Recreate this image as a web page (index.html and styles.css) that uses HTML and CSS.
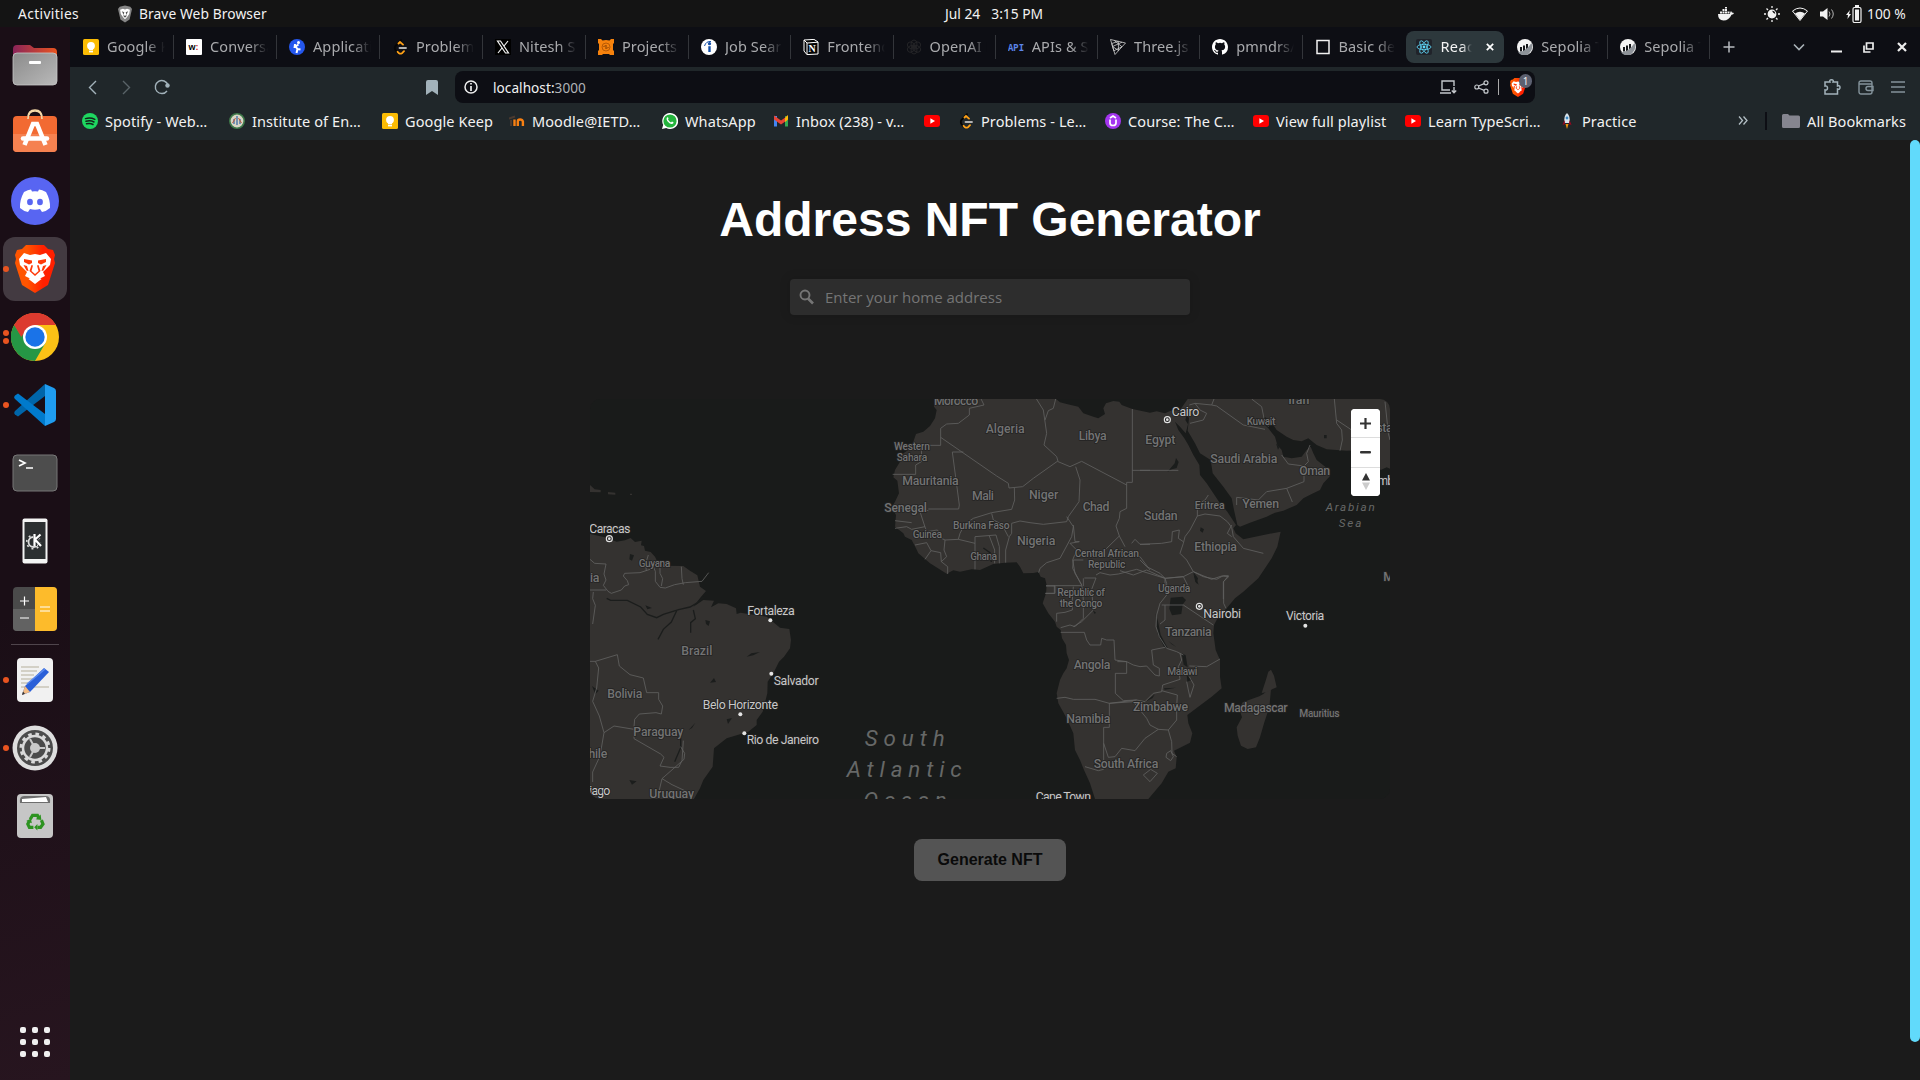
FILE: index.html
```html
<!DOCTYPE html>
<html lang="en">
<head>
<meta charset="utf-8">
<title>Address NFT Generator</title>
<link rel="stylesheet" href="styles.css">
</head>
<body>
<svg class="defs" width="0" height="0">
  <symbol id="keep" viewBox="0 0 16 16"><rect width="16" height="16" rx="1.5" fill="#fbbc04"/><circle cx="8" cy="6.8" r="3.9" fill="#fff"/><rect x="6" y="9" width="4" height="2.4" fill="#fff"/><rect x="6" y="12" width="4" height="1.4" fill="#fff"/></symbol>
  <symbol id="leet" viewBox="0 0 16 16" fill="none" stroke-width="1.8" stroke-linecap="round"><path d="M9 1.2 3.4 7q-1.2 2 0 4l2 2.4" stroke="#050505"/><path d="M6.500 4.500 8 3l3 2.600M5.600 12.800l1.400 1.400q1.400 .8 3 0l2-2" stroke="#ffa116"/><path d="M7.500 9h6.500" stroke="#b3b3b3"/></symbol>
  <symbol id="yt" viewBox="0 0 16 16"><rect y="2" width="16" height="12" rx="3" fill="#f00"/><path d="M6.400 5.200v5.600L11 8z" fill="#fff"/></symbol>
  <symbol id="ether" viewBox="0 0 16 16"><circle cx="8" cy="8" r="8" fill="#f4f4f4"/><path d="M3 8h2v4.500H3zM6 6.500h2v5.500H6zM9 5h2v5.500H9z" fill="#14161a"/><path d="M1 13.500Q9 12.500 14.500 4q2.500 6-2.500 10.500T1 13.500z" fill="#8d9298"/></symbol>
  <symbol id="lion" viewBox="0 0 40 48"><path d="M11 0h18l4 4 5 1 2 5-1 4 1 4-7 22-13 8-13-8L0 18l1-4-1-4 2-5 5-1z" fill="url(#braveFill)"/><path d="m4 14 5-6 6 2 5-1 5 1 6-2 5 6-1 6-7 7 2 4-6 3-4-3-4 3-6-3 2-4-7-7zM13.500 34l6.500-3 6.500 3-6.500 5z" fill="#fff"/><path d="m9 14 8 1.500v2.500l-3 1.500-5-2.500zM31 14l-8 1.500v2.500l3 1.500 5-2.500zM16.500 20l1.500.5-1.500 5.500 3.500 3 3.500-3-1.500-5.500 1.500-.5 2 6-5.500 5-5.500-5zM8.500 20l3.500 1 1.500 5-2-.5zM31.500 20 28 21l-1.500 5 2-.5z" fill="#ff3a0a"/></symbol>
  <linearGradient id="braveFill"><stop offset=".3" stop-color="#ff5500"/><stop offset=".7" stop-color="#ff2000"/></linearGradient>
</svg>

<header class="topbar">
  <span class="activities">Activities</span>
  <span class="app-name"><svg width="14" height="18" viewBox="0 0 40 48"><path d="M5 3 20 0l15 3 5 7-7 30-13 8-13-8L0 10z" fill="#868686"/><path d="m6 12 8-3 6 2 6-2 8 3-2 12-7 10-5 5-5-5-7-10z" fill="#fff"/><path d="m11 16 7 3-2 7 4 4 4-4-2-7 7-3-4 8-2 9h-6l-2-9z" fill="#555"/></svg>Brave Web Browser</span>
  <span class="clock"><span>Jul 24</span><span>3:15 PM</span></span>
  <span class="tray">
    <svg class="docker" width="16" height="14" viewBox="0 0 16 14" fill="#f2f2f2"><path d="M0 7h12q0-2 1-3l1 1.500 2 .5q-.5 1.500-2.500 1.700Q11 13.500 5.500 13.500 0 13 0 7z"/><path d="M2 4.500h2v2H2zM4.500 4.500h2v2h-2zM7 4.500h2v2H7zM9.500 4.500h2v2h-2zM4.500 2h2v2h-2zM7 2h2v2H7zM7 0h2v1.500H7z"/></svg>
    <svg width="16" height="16" viewBox="0 0 16 16"><circle cx="8" cy="8" r="3.800" fill="none" stroke="#f2f2f2" stroke-width="1.200"/><path d="M8 4a4 4 0 1 0 4 4A5 5 0 0 1 8 4z" fill="#f2f2f2"/><path d="M8 0v2M8 14v2M0 8h2M14 8h2M2.500 2.500 4 4M12 12l1.500 1.500M2.500 13.500 4 12M12 4l1.500-1.500" stroke="#f2f2f2" stroke-width="1.300"/></svg>
    <svg width="16" height="14" viewBox="0 0 16 14"><path d="M.5 4Q8-2 15.500 4L8 13.500z" fill="none" stroke="#f2f2f2"/><path d="M3 6.500Q8 3 13 6.500L8 13z" fill="#f2f2f2"/></svg>
    <svg width="15" height="14" viewBox="0 0 15 14"><path d="M0 4.500h3L7.500 1v12L3 9.500H0z" fill="#f2f2f2"/><path d="M9 4.500q2 2.500 0 5M11.500 2.500q3.500 4.500 0 9" stroke="#b5b5b5" fill="none"/></svg>
    <svg class="battery" width="16" height="18" viewBox="0 0 16 18"><path d="M4 5 0 10h2l-.5 4L5 9H3z" fill="#f2f2f2"/><rect x="7" y="2.500" width="8" height="15" rx="1.500" fill="none" stroke="#f2f2f2" stroke-width="1.200"/><rect x="9" y="4.500" width="4" height="11" fill="#f2f2f2"/><rect x="9" y="0" width="4" height="2.500" fill="#f2f2f2"/></svg>
    <span class="percent">100 %</span>
  </span>
</header>

<div class="desktop">
<aside class="dock">
  <div class="slot"><svg width="46" height="46" viewBox="0 0 46 46"><defs><linearGradient id="fold"><stop stop-color="#8a2459"/><stop offset="1" stop-color="#e95420"/></linearGradient><linearGradient id="grey" x2="1" y2="1"><stop stop-color="#8b8b8b"/><stop offset="1" stop-color="#b9b9b9"/></linearGradient></defs><path d="M1 7q0-4 4-4h13l4 3h19q4 0 4 4v8H1z" fill="url(#fold)"/><rect x="1" y="11" width="44" height="32" rx="4" fill="url(#grey)" stroke="#c8c8c8" stroke-width=".8"/><rect x="17" y="19" width="12" height="3" rx="1" fill="#fff"/></svg></div>
  <div class="slot"><svg class="raised" width="46" height="46" viewBox="0 0 46 46"><path d="M16 10q0-8 7-8t7 8" fill="none" stroke="#f5d9a8" stroke-width="1.700"/><rect x="1" y="8" width="44" height="36" rx="4" fill="#f26a32"/><path d="M1 26h44v14q0 4-4 4H5q-4 0-4-4z" fill="#f58150"/><path d="M16 11q0-8 7-8t7 8" fill="none" stroke="#f5d9a8" stroke-width="1.700"/><path d="m12.500 37 8.500-21h4l8.500 21" fill="none" stroke="#fff" stroke-width="4.500"/><path d="M11 30.500h24" stroke="#fff" stroke-width="4.500" stroke-linecap="round"/></svg></div>
  <div class="slot"><svg width="48" height="48" viewBox="0 0 48 48"><circle cx="24" cy="24" r="24" fill="#5865f2"/><path d="M13 15q4-2.500 7-2.500l1 2q3-.5 6 0l1-2q3 0 7 2.500 4.500 8 4 16-4 3.500-8 4l-2-3q-5 1.300-10 0l-2 3q-4-.5-8-4-.5-8 4-16z" fill="#fff"/><ellipse cx="19" cy="25" rx="2.900" ry="3.200" fill="#5865f2"/><ellipse cx="29" cy="25" rx="2.900" ry="3.200" fill="#5865f2"/></svg></div>
  <div class="slot"><i class="run"></i><div class="active-tile"><svg width="40" height="48"><use href="#lion"/></svg></div></div>
  <div class="slot"><i class="run"></i><i class="run"></i><svg width="48" height="48" viewBox="0 0 48 48"><circle cx="24" cy="24" r="24" fill="#fbc116"/><path d="M24 24 14.500 30 3.200 12A24 24 0 0 0 24 48L34.400 30z" fill="#259745"/><path d="M24 24H13.600L3.200 12A24 24 0 0 1 44.800 12H24z" fill="#dc3b2f"/><path d="M3.200 12 13.600 30l8-10z" fill="#259745"/><path d="M24 12h20.800A24 24 0 0 0 3.200 12l7 12 8-10z" fill="#dc3b2f"/><circle cx="24" cy="24" r="12" fill="#fff"/><circle cx="24" cy="24" r="9.700" fill="#1a73e8"/></svg></div>
  <div class="slot"><i class="run"></i><svg width="42" height="42" viewBox="0 0 42 42"><path d="M1 27q-1.500 2 0 3.500l3 2L31 12V0z" fill="#0065a9"/><path d="M1 15q-1.500-2 0-3.500l3-2L31 30v12z" fill="#007acc"/><path d="m31 0 9 4q2 1 2 3v28q0 2-2 3l-9 4z" fill="#1f9cf0"/></svg></div>
  <div class="slot"><svg width="46" height="38" viewBox="0 0 46 38"><rect x="1" y="1" width="44" height="36" rx="4" fill="#4d4d4d" stroke="#777"/><path d="m7 6 6 3-6 3M14 14h7" fill="none" stroke="#fff" stroke-width="1.700"/></svg></div>
  <div class="slot"><svg width="26" height="46" viewBox="0 0 26 46"><rect x=".5" y=".5" width="25" height="45" rx="2" fill="#f4f4f4"/><rect x="2.500" y="4" width="21" height="37" fill="#2c2f31"/><circle cx="11.500" cy="24" r="5" fill="none" stroke="#ddd" stroke-width="1.800"/><circle cx="11.500" cy="24" r="6.800" fill="none" stroke="#ddd" stroke-width="1.600" stroke-dasharray="2 3.340"/><path d="M13 16v12M19 16l-5.500 5.500 6 6.500" stroke="#2c2f31" stroke-width="4" fill="none"/><path d="M12.500 16v12M18.500 16.500 13 21.500l6 6.500" stroke="#fff" stroke-width="2.200" fill="none"/></svg></div>
  <div class="slot"><svg width="46" height="46" viewBox="0 0 46 46"><rect x="1" y="1" width="44" height="44" rx="4" fill="#4a4a4a"/><path d="M1 23h22v22H5q-4 0-4-4z" fill="#626262"/><path d="M23 1h18q4 0 4 4v36q0 4-4 4H23z" fill="#fdbb2b"/><path d="M8 15h9M12.500 10.500v9M8 32h9M28 21h10M28 25h10" stroke="#fff" stroke-width="1.200"/></svg></div>
  <div class="sep"></div>
  <div class="slot"><i class="run"></i><svg width="38" height="46" viewBox="0 0 38 46"><rect x="1" y="1" width="36" height="44" rx="4" fill="#f1f1f1"/><path d="M5 10h18M5 14h16M5 18h13M5 22h14M5 26h12M5 30h28" stroke="#c9c5b8" stroke-width="1.600"/><path d="m6 38 3-9L28 11l5 4-19 20z" fill="#2a5fd8"/><path d="m6 38 3-9 5 6z" fill="#f3bb83"/><path d="m6 38 1-3.500 2 2.300z" fill="#333"/><path d="m11 27 18-15" stroke="#5b8bf0" stroke-width="1.500"/></svg></div>
  <div class="slot"><i class="run"></i><svg width="46" height="46" viewBox="0 0 46 46"><circle cx="23" cy="23" r="22.500" fill="#dedede"/><circle cx="23" cy="23" r="18" fill="#4b4b4b"/><circle cx="23" cy="23" r="12" fill="none" stroke="#d9d9d9" stroke-width="2.500"/><circle cx="23" cy="23" r="14" fill="none" stroke="#d9d9d9" stroke-width="3" stroke-dasharray="3.600 3.730"/><circle cx="23" cy="23" r="5" fill="#c9c9c9"/><path d="M23 23h10M23 23l-5-9M23 23l-5 9" stroke="#c9c9c9" stroke-width="2"/></svg></div>
  <div class="slot"><svg width="38" height="46" viewBox="0 0 38 46"><rect x="1" y="1" width="36" height="44" rx="4" fill="#c6c6c6"/><path d="M4 10q-1-7 4-7h22q5 0 4 7z" fill="#6e6e6e"/><path d="M6 9V6l24-2 2 5z" fill="#fff"/><g transform="translate(19 29.500) scale(.8) translate(-19 -29)"><path d="M13 25l3-5h6l2 4M27 26l2 5-3 4h-4M17 35h-5l-2-4 2-4" fill="none" stroke="#2d9320" stroke-width="4"/><path d="m26 19 1 7-7-1zM22 31v8l-4-4zM8 27l6-3 1 6z" fill="#2d9320"/></g></svg></div>
  <div class="grid-btn"><i></i><i></i><i></i><i></i><i></i><i></i><i></i><i></i><i></i></div>
</aside>

<div class="browser">
  <nav class="tabs">
    <div class="tab"><svg><use href="#keep"/></svg><span>Google Keep</span></div>
    <div class="tab"><svg viewBox="0 0 16 16"><rect width="16" height="16" rx="1" fill="#fff"/><text x="2.500" y="10.500" class="fav-w">w<tspan fill="#e2241a">:</tspan></text></svg><span>Conversation</span></div>
    <div class="tab"><svg viewBox="0 0 16 16"><circle cx="8" cy="8" r="8" fill="#2457ee"/><circle cx="9.500" cy="3.600" r="1.500" fill="#fff"/><path d="m9.500 5.500-3 2 2 2.500-1 4M6 5 5.500 9M8.500 10l3 .5" stroke="#fff" stroke-width="2" fill="none"/></svg><span>Application</span></div>
    <div class="tab"><svg><use href="#leet"/></svg><span>Problems -</span></div>
    <div class="tab"><svg viewBox="0 0 16 16"><rect width="16" height="16" fill="#000"/><path d="M2.500 2h3l8 12h-3zM13 2 9 7M7 9l-4 5" stroke="#f3f3f3" stroke-width="1.200" fill="none"/></svg><span>Nitesh Singh</span></div>
    <div class="tab"><svg viewBox="0 0 16 16"><path d="M0 0h3l1.500 1.500L8 1l3.500.5L13 0h3v4l-1 1v6l1 1v4h-4l-1-1H5l-1 1H0v-4l1-1V5L0 4z" fill="#f6820d"/><circle cx="8" cy="8" r="4" fill="none" stroke="#b85a05"/><path d="M5.500 8 7 6.500M10.500 8 9 9.500M8 6v4" stroke="#7e3a03"/></svg><span>Projects |</span></div>
    <div class="tab"><svg viewBox="0 0 16 16"><circle cx="8" cy="8" r="8" fill="#fff"/><circle cx="8.500" cy="4.700" r="1.600" fill="#134fa8"/><path d="M8.500 7.200V13" stroke="#134fa8" stroke-width="2.400"/><path d="M3.500 7Q5 2 10 2.500" fill="none" stroke="#134fa8"/></svg><span>Job Search</span></div>
    <div class="tab"><svg viewBox="0 0 16 16"><path d="m1 1 10-.6L15 3v12l-11 .6L1 12z" fill="#050505" stroke="#fff"/><path d="M1 1l3 3 11-.8M4 4v11.500" stroke="#fff" fill="none"/><text x="5.600" y="13" class="fav-n">N</text></svg><span>Frontend I</span></div>
    <div class="tab"><svg viewBox="0 0 16 16" fill="none" stroke="#242427" stroke-width="1"><ellipse cx="8" cy="5" rx="3" ry="4"/><ellipse cx="8" cy="11" rx="3" ry="4"/><ellipse cx="5.300" cy="6.500" rx="3" ry="4" transform="rotate(-60 5.300 6.500)"/><ellipse cx="10.700" cy="6.500" rx="3" ry="4" transform="rotate(60 10.700 6.500)"/><ellipse cx="5.300" cy="9.700" rx="3" ry="4" transform="rotate(60 5.300 9.700)"/><ellipse cx="10.700" cy="9.700" rx="3" ry="4" transform="rotate(-60 10.700 9.700)"/></svg><span>OpenAI P</span></div>
    <div class="tab"><svg viewBox="0 0 16 16"><text x="0" y="12" textLength="16" lengthAdjust="spacingAndGlyphs" class="fav-api">API</text></svg><span>APIs &amp; Services</span></div>
    <div class="tab"><svg viewBox="0 0 16 16" fill="none" stroke="#d0d0d0" stroke-width=".8"><path d="M.5.5 15.500 4 5 15.500zM4.200 1.400 12 7.800 3.800 11.800 1.800 4.500 8.300 2.400 8.500 11.500 2.600 7.500 12 3.200"/></svg><span>Three.js –</span></div>
    <div class="tab"><svg viewBox="0 0 16 16"><path fill="#fff" d="M8 0C3.580 0 0 3.580 0 8c0 3.540 2.290 6.530 5.470 7.590.4.070.55-.17.55-.38 0-.19-.010-.82-.010-1.490-2.010.37-2.530-.49-2.690-.94-.09-.23-.48-.94-.82-1.130-.28-.15-.68-.52-.010-.53.63-.010 1.080.58 1.230.82.72 1.210 1.870.87 2.330.66.070-.52.28-.87.510-1.070-1.780-.2-3.640-.89-3.640-3.950 0-.87.310-1.590.82-2.150-.08-.2-.36-1.020.08-2.120 0 0 .67-.21 2.200.82a7.400 7.400 0 0 1 4 0c1.530-1.040 2.200-.82 2.200-.82.44 1.100.16 1.920.08 2.120.51.560.82 1.270.82 2.150 0 3.070-1.870 3.750-3.650 3.950.29.250.54.730.54 1.480 0 1.070-.010 1.930-.010 2.200 0 .21.150.46.550.38A8 8 0 0 0 16 8c0-4.420-3.580-8-8-8z"/></svg><span>pmndrs/react</span></div>
    <div class="tab no-div"><svg viewBox="0 0 16 16"><rect x="2" y="1.500" width="12" height="13" fill="none" stroke="#f2f2f2" stroke-width="1.500"/></svg><span>Basic demo</span></div>
    <div class="tab current"><svg viewBox="0 0 16 16"><rect width="16" height="16" rx="2" fill="#20232a"/><g fill="none" stroke="#61dafb" stroke-width=".8"><ellipse cx="8" cy="8" rx="7" ry="2.700"/><ellipse cx="8" cy="8" rx="7" ry="2.700" transform="rotate(60 8 8)"/><ellipse cx="8" cy="8" rx="7" ry="2.700" transform="rotate(120 8 8)"/></g><circle cx="8" cy="8" r="1.400" fill="#61dafb"/></svg><span>React App</span><svg class="tab-x" viewBox="0 0 8 8"><path d="m.8.800 6.400 6.400M7.200.8.800 7.200" stroke="#fff" stroke-width="1.700"/></svg></div>
    <div class="tab"><svg><use href="#ether"/></svg><span>Sepolia Tr</span></div>
    <div class="tab"><svg><use href="#ether"/></svg><span>Sepolia Tr</span></div>
    <div class="window-btns">
      <svg width="12" height="12" viewBox="0 0 12 12"><path d="M6 .5v11M.5 6h11" stroke="#b8bcc0" stroke-width="1.500"/></svg>
      <svg class="push" width="12" height="8" viewBox="0 0 12 8"><path d="m1 1.500 5 5 5-5" fill="none" stroke="#a9b2b8" stroke-width="1.600"/></svg>
      <svg width="11" height="12" viewBox="0 0 11 12"><path d="M0 10.500h11" stroke="#eee" stroke-width="2"/></svg>
      <svg width="11" height="11" viewBox="0 0 11 11" fill="none" stroke="#eee" stroke-width="1.700"><path d="M3.500 1h6.500v6H3.500z"/><path d="M1 3.500V10h6.500"/></svg>
      <svg width="10" height="10" viewBox="0 0 10 10"><path d="m1 1 8 8M9 1 1 9" stroke="#eee" stroke-width="2.200"/></svg>
    </div>
  </nav>

  <div class="toolbar">
    <div class="nav-btns">
      <svg width="10" height="15" viewBox="0 0 10 15"><path d="M8 1 1.500 7.500 8 14" fill="none" stroke="#a2b2ba" stroke-width="1.400"/></svg>
      <svg width="10" height="15" viewBox="0 0 10 15"><path d="m2 1 6.500 6.500L2 14" fill="none" stroke="#596368" stroke-width="1.400"/></svg>
      <svg width="16" height="16" viewBox="0 0 16 16"><path d="M14 6A6.500 6.500 0 1 0 13 12" fill="none" stroke="#a2b2ba" stroke-width="1.400"/><circle cx="13.500" cy="6.500" r="2.200" fill="#a2b2ba"/></svg>
    </div>
    <svg class="bm" width="12" height="15" viewBox="0 0 12 15"><path d="M0 2q0-2 2-2h8q2 0 2 2v13l-6-4-6 4z" fill="#a2b2ba"/></svg>
    <div class="url">
      <svg width="14" height="14" viewBox="0 0 14 14"><circle cx="7" cy="7" r="6" fill="none" stroke="#eee" stroke-width="1.500"/><path d="M7 3v1.600M7 6v5" stroke="#eee" stroke-width="1.700"/></svg>
      <span class="host">localhost:<b>3000</b></span>
      <svg width="17" height="14" viewBox="0 0 17 14" fill="none" stroke="#c4c8cc" stroke-width="1.400"><path d="M14 6V1H2v9h8M0 13h11M14 7v5.500M11.800 10.500l2.200 2.200 2.200-2.200"/></svg>
      <svg class="share" width="15" height="14" viewBox="0 0 15 14" fill="none" stroke="#c4c8cc" stroke-width="1.200"><circle cx="2.800" cy="7" r="2"/><circle cx="12" cy="2.800" r="2"/><circle cx="12" cy="11.200" r="2"/><path d="M4.500 6 10.200 3.600M4.500 8l5.700 2.400"/></svg>
      <i class="bar"></i>
      <span class="shield"><svg width="16" height="19"><use href="#lion"/></svg><em>1</em></span>
    </div>
    <div class="ext">
      <svg width="17" height="16" viewBox="0 0 17 16"><path d="M1 3h5q-1-2.200 1.500-2.200T9 3h4.500v4q2.500-.8 2.500 1.500T13.500 10v5H1v-4q2.500.5 2.500-2T1 7z" fill="none" stroke="#a2b2ba" stroke-width="1.500"/></svg>
      <svg width="16" height="15" viewBox="0 0 16 15" fill="none" stroke="#84939b" stroke-width="1.400"><rect x="1" y="1" width="13" height="13" rx="2"/><path d="M1 4h13M15 6.500h-5q-2 0-2 2t2 2h5z"/></svg>
      <svg width="14" height="12" viewBox="0 0 14 12"><path d="M0 1h14M0 6h14M0 11h14" stroke="#84939b" stroke-width="1.500"/></svg>
    </div>
  </div>

  <div class="bookmarks">
    <a style="--w:107px"><svg viewBox="0 0 16 16"><circle cx="8" cy="8" r="8" fill="#1ed760"/><path d="M3.500 5.600q5-1.400 9.300.8M4 8.300q4.500-1.200 8 .7M4.500 10.800q3.800-1 6.500.7" fill="none" stroke="#12251a" stroke-width="1.500" stroke-linecap="round"/></svg><span>Spotify - Web…</span></a>
    <a style="--w:113px"><svg viewBox="0 0 16 16"><circle cx="8" cy="8" r="7.200" fill="#d9d6c6" stroke="#3f7a4a" stroke-width="1.600"/><path d="M8 3v9M5 6v5M11 6v5" stroke="#4a76a8" stroke-width="1.400"/><path d="m3.500 10 3-5M12.500 10l-3-5" stroke="#c05b3c"/></svg><span>Institute of En…</span></a>
    <a style="--w:87px"><svg><use href="#keep"/></svg><span>Google Keep</span></a>
    <a style="--w:113px"><svg viewBox="0 0 16 16" fill="none" stroke-width="2.400"><path d="M5.500 13V6.500M8.800 13V8.500q0-2 2.300-2t2.800 2V13" stroke="#f98012"/><path d="M2 13V7M0 5.500l6-2" stroke="#4a3a30" stroke-width="2"/></svg><span>Moodle@IETD…</span></a>
    <a style="--w:71px"><svg viewBox="0 0 16 16"><path d="m0 16 1.200-4.200A8 8 0 1 1 4.200 14.900z" fill="#fff"/><circle cx="8" cy="8" r="6.600" fill="#25b43e"/><path d="M5 4.600q1-.8 1.500.8l-.5 1q1 2 3 3l1-1q2 .8 1.500 1.600-1.300 1.700-4 .3Q4.500 8 4.500 6z" fill="#fff"/></svg><span>WhatsApp</span></a>
    <a style="--w:111px"><svg viewBox="0 0 16 16"><path d="M1 3h3v10.500H1z" fill="#4285f4"/><path d="M12 3h3v10.500h-3z" fill="#34a853"/><path d="m1 2.500 7 5 7-5v4l-7 5-7-5z" fill="#ea4335"/><path d="m12 5 3-3v4.500L12 9z" fill="#fbbc04"/></svg><span>Inbox (238) - v…</span></a>
    <a class="bare"><svg><use href="#yt"/></svg></a>
    <a style="--w:107px"><svg><use href="#leet"/></svg><span>Problems - Le…</span></a>
    <a style="--w:108px"><svg viewBox="0 0 16 16"><circle cx="8" cy="8" r="8" fill="#a435f0"/><path d="M5 6.500v3.500q0 2.500 3 2.500t3-2.500V6.500M5 5l3-2 3 2" fill="none" stroke="#fff" stroke-width="1.700"/></svg><span>Course: The C…</span></a>
    <a style="--w:112px"><svg><use href="#yt"/></svg><span>View full playlist</span></a>
    <a style="--w:114px"><svg><use href="#yt"/></svg><span>Learn TypeScri…</span></a>
    <a style="--w:56px"><svg viewBox="0 0 16 16"><path d="M8 0q3.500 3 2.500 10h-5Q4.500 3 8 0z" fill="#d9e4ec"/><circle cx="8" cy="5" r="1.400" fill="#3b88c3"/><path d="m5.500 7-2 5 2.500-1M10.500 7l2 5-2.500-1" fill="#a0041e"/><path d="M6.500 11h3L8 16z" fill="#f4900c"/></svg><span>Practice</span></a>
    <div class="bm-right">
      <svg width="10" height="9" viewBox="0 0 10 9"><path d="m1 .5 3.500 4L1 8.500M5.500.5l3.500 4-3.500 4" fill="none" stroke="#b3bfc5" stroke-width="1.300"/></svg>
      <i></i>
      <svg class="folder" width="18" height="14" viewBox="0 0 18 14"><path d="M0 1.500Q0 0 1.500 0H6l1.500 1.500h9Q18 1.500 18 3v9.500q0 1.500-1.500 1.500h-15Q0 14 0 12.500z" fill="#85858f"/></svg>
      <span>All Bookmarks</span>
    </div>
  </div>

  <main class="page">
    <h1>Address NFT Generator</h1>
    <div class="search">
      <svg width="16" height="16" viewBox="0 0 16 16"><circle cx="6" cy="6" r="4.500" fill="none" stroke="#757575" stroke-width="1.900"/><path d="m9 9.500 5 5" stroke="#757575" stroke-width="2.600"/></svg>
      <input type="text" placeholder="Enter your home address">
    </div>
    <div class="map">
      <svg width="800" height="400" viewBox="0 0 2400 1200">
        <g class="land">
          <g transform="translate(-30 -27)">
            <path d="M30 432 75 442 110 455 135 451 152 444 165 456 185 452 183 466 192 468 195 482 212 486 225 500 232 515 250 527 310 528 330 542 352 556 360 590 378 603 362 622 340 650 370 630 402 632 393 652 415 640 440 642 468 655 470 672 482 668 505 672 560 680 600 713 628 717 633 750 630 775 612 800 597 815 580 850 563 875 562 910 548 965 530 990 530 1005 505 1025 480 1033 440 1045 402 1075 398 1130 370 1170 360 1195 340 1230H30zM30 285 44 298 62 300 62 307 30 306zM84 306 106 308 106 314 84 313zM150 311h6v4h-6z"/>
          </g>
          <g transform="translate(870 -27)">
            <path d="M162 20 162 50 170 60 165 85 150 108 130 125 108 132 100 155 85 180 70 190 60 215 45 240 40 262 52 272 57 310 45 335 35 352 48 375 45 410 70 430 75 440 95 450 108 475 115 490 150 520 200 551 220 541 240 545 275 538 300 540 340 522 375 518 410 517 420 530 430 550 460 549 475 546 482 560 495 565 500 585 498 610 488 640 505 670 525 695 530 710 542 720 546 745 558 765 560 790 567 810 560 835 550 850 540 870 530 910 535 940 560 985 580 1030 585 1080 600 1110 612 1140 630 1180 645 1227 805 1227 845 1180 865 1145 887 1135 890 1102 882 1082 930 1058 937 1030 925 1000 922 975 955 950 995 920 1025 895 1020 860 1020 810 1007 780 1000 730 1002 705 1015 680 1040 655 1065 625 1090 605 1135 565 1155 535 1175 505 1192 470 1202 425 1140 437 1090 448 1067 430 1060 415 1068 405 1042 365 1020 340 1000 310 980 280 960 255 958 225 940 195 925 165 913 145 895 120 885 95 900 110 917 130 924 103 916 90 928 50 928 20 900 60 872 62 855 70 830 64 810 68 757 57 725 45 718 35 700 33 678 40 670 55 675 72 655 85 640 80 610 70 595 50 560 42 540 37 520 20z"/>
          </g>
          <g transform="translate(1650 -27)">
            <path d="M148 20 145 60 140 70 147 85 143 122 165 160 180 190 212 210 218 250 250 290 275 325 282 360 292 405 300 410 330 398 380 380 405 368 430 362 470 345 490 325 515 312 540 300 550 280 570 258 568 240 530 210 520 190 512 170 500 180 485 200 455 205 430 200 425 180 412 165 405 140 385 115 375 105 372 80 390 90 410 120 440 140 460 150 485 154 505 145 530 165 560 178 620 182 670 180 700 210 722 240 740 232 760 240V20z"/>
          </g>
          <path d="M2058 858 2045 855 2040 870 2022 885 2010 892 1960 910 1950 930 1958 955 1942 985 1945 1010 1955 1040 1975 1050 2000 1045 2012 1015 2025 970 2040 925 2045 870z" transform="translate(-2 0)"/>
          <path d="M2027 845 2035 818 2043 812 2052 830 2060 865 2048 870 2030 880 2015 882z"/>
        </g>

        <g class="lake" transform="translate(1320 483)"><path d="m422 113 36-3 10 10-10 14-4 28-28 4-8-20zM377 160l5 60 20 40 12 6-22-42-8-40zM455 280l12 6 6 36-12-8zM470 345l16 14-14 6zM490 40l10 18 6 16-10-8zM345 425l30-22-8 12zM415 243l24 18-14-8zM188 150l10 8-4 4zM402 385l36-2-34 6z"/></g>
        <g class="lake" transform="translate(1650 -27)"><path d="m82 246 22-26 4-16 8 12-6 18-14 4zM182 412l10 6-4 10-8-6zM160 545l14 20-4 16zM552 135h8v10h-8zM408 160l10 12-4 8z"/></g>
        <g class="lake" transform="translate(-30 -27)"><path d="m150 492 12 4-6 16-8-4zM376 690l14 4-4 14-8-6zM196 646l20 8-14 4zM500 800l14-10 26-4-20 10zM390 878l12-14 6 12zM440 988l16-4-12 18zM148 1170l22 4-14 10zM326 1020l20-22-10 16zM36 888l20 14-10 10z"/></g>
        <g class="river" transform="translate(-30 -27)"><path d="m80 625 12 6 50 0 40 20 20 22 28 10 20-10 46-14 34-8 24-14 16-16M290 662l-16 34-24 22-16 30M340 660l6 26-14 12v30M302 1045v28l-18 42"/></g>
        <g class="river" transform="translate(870 -27)"><path d="m310 474 20 14 4 28"/></g>

        <g class="borders">
          <g transform="translate(-30 -27)"><path d="m30 508 14 12 34 2-6 30 6 18-8 16 14 18 10 6 30-10 10-12 12-4-4-12-12-14 4-8 46-2 30-10 10-8 6 14v30l14 18 16 2 28-10 32-6 50-4 20-26M205 495l-8 26 2 22M240 528v22l8 16-4 22M304 530l2 36 4 18M30 600h48M40 606l-2 20 8 20-8 56M30 814l16 0 66-20 6 34 32 26 40 10 10 44h36v20l12 20-4 24-16-4-50 4-14 16-2 22 0 36 80 46 10 10-12 26 30 4 26 0 10-20 4-60M46 814l10 20-6 60-12 40 20 44 14 50-12 70-22 48v30M72 1028l30-20 60 10M302 1070l12 20-2 18-66 58-8 34M246 1166l30 18 64 30"/></g>
          <g transform="translate(870 -27)"><path d="M300 20 312 45 268 55 268 75 235 100 200 102 182 115V166H125L124 215 107 225V253H38M182 142 350 258 385 280 387 294 428 290 460 265 532 214 570 230 605 214 740 285M250 186H217L238 345 236 357H145M145 362 120 357 60 355M403 294 404 330 395 358 335 368 280 385 255 402 240 430 235 448 195 450 192 480 200 500 184 515 203 530V552M465 20 490 60 500 130 492 165 530 200 534 214M527 27 520 55 505 62 495 90M757 57V277H740V355L720 365 718 385 708 408 718 438 680 475 665 490M757 241H810M587 230 600 270 597 335 565 380 560 395 490 403 450 398 420 393 395 400V430L388 440 377 480V518M335 370 340 390 365 402 385 440M285 440 348 435 358 470V520M285 440V538M328 438 344 480V520M560 380 580 410 575 440 540 505 500 518 480 535 476 548M580 405 585 455 598 455 570 460 590 480 578 510 585 550 605 585M610 565 610 588M120 365 133 405 140 425 172 420 180 430 178 442 195 450M45 392 95 398M45 415 80 410 95 418 135 410M105 465 140 458 153 482 135 508M153 482 182 488 184 515M498 587H605M523 587V610H498M235 448 285 460M718 438 735 470M720 480 780 500 810 540M755 460 765 448 780 463H810M720 542 760 555 800 540 855 565"/></g>
          <g transform="translate(1320 483)"><path d="M160 0 130 0 128 25 155 75 157 88 160 120 160 175 135 200 120 195 92 203M163 54H198L185 88 190 150 155 185 130 200M75 78H48M75 78V100H45M80 185 80 160 105 157 127 150V120L130 80M198 45 210 38 240 45 265 42 320 28 340 35 405 55 460 50 490 35 520 50 560 58 580 47H595L581 65V130L588 145M405 55 410 70V105L390 130 380 165 378 200 388 230 410 265 440 275 460 285M395 135H460L550 195M405 135V180L390 192M92 217H163L170 240 180 255 212 255 215 235 230 240 252 240 255 300 290 305V340H256V400L280 422 320 420M262 305 290 305 310 315 330 320 350 318 375 345 388 348 388 325 370 315 365 270 405 262M80 415 105 412 130 418 195 418 238 430 320 420 345 425 370 400 395 395 398 375 450 358 445 320 455 300 450 280M238 430V502H221V600M238 430 310 425 350 475 360 495 385 508 415 510 440 480V440L442 405 395 392M415 510 425 545 426 580 440 590M221 550 235 592 255 590 275 565 315 572 345 535 385 508M165 620 205 632 221 628M410 580 422 572 430 590 422 602 408 592zM340 645 362 628 382 640 360 665zM478 318 530 320 570 297M470 365 475 390 480 412 492 375 478 350"/></g>
          <g transform="translate(1650 -27)"><path d="M148 45 165 40 215 45 230 48 310 105M215 45 222 27M150 100 190 90 200 70 180 60 165 40M335 27 365 50 372 85 385 110M310 105 375 118M425 195 445 222 492 228M510 165 500 190 505 215 492 228 492 275 440 295 380 305 355 330 290 322V345M440 295 457 336M583 27 590 100 605 120 607 150 600 182M735 35 745 130 750 150M590 90 635 120M205 315 195 330 172 345V378L195 372 240 378 262 395 275 412 280 440 310 475 370 490M172 378 150 420 135 440 130 460 120 490 140 510 160 545 215 568 245 558 266 560 250 575V627M0 463 65 460 95 455 97 425 118 420 115 445 130 455M0 241H115M0 510 20 530 60 550 75 565 130 560 150 600M75 565V600M275 405 262 430 275 440"/></g>
        </g>

        <g class="country">
          <g transform="translate(-30 -27)"><text x="176" y="532" textLength="95" class="sm">Guyana</text><text x="30" y="577" textLength="28">ia</text><text x="304" y="794" textLength="93">Brazil</text><text x="82" y="923" textLength="105">Bolivia</text><text x="160" y="1037" textLength="150">Paraguay</text><text x="2" y="1104" textLength="80">Chile</text><text x="208" y="1223" textLength="134">Uruguay</text></g>
          <g transform="translate(870 -27)"><text x="162" y="46" textLength="133">Morocco</text><text x="317" y="128" textLength="117">Algeria</text><text x="596" y="150" textLength="84">Libya</text><text x="42" y="179" textLength="108" class="sm">Western</text><text x="50" y="212" textLength="92" class="sm">Sahara</text><text x="67" y="285" textLength="169">Mauritania</text><text x="276" y="329" textLength="66">Mali</text><text x="447" y="327" textLength="88">Niger</text><text x="608" y="364" textLength="80">Chad</text><text x="13" y="367" textLength="128">Senegal</text><text x="219" y="417" textLength="170" class="sm">Burkina Faso</text><text x="98" y="443" textLength="88" class="sm">Guinea</text><text x="411" y="465" textLength="115">Nigeria</text><text x="271" y="510" textLength="80" class="sm">Ghana</text><text x="584" y="500" textLength="193" class="sm">Central African</text><text x="624" y="533" textLength="112" class="sm">Republic</text></g>
          <g transform="translate(1320 483)"><text x="384" y="97" textLength="97" class="sm">Uganda</text><text x="82" y="108" textLength="143" class="sm">Republic of</text><text x="89" y="141" textLength="128" class="sm">the Congo</text><text x="405" y="227" textLength="140">Tanzania</text><text x="131" y="327" textLength="110">Angola</text><text x="412" y="346" textLength="90" class="sm">Malawi</text><text x="309" y="453" textLength="165">Zimbabwe</text><text x="109" y="490" textLength="132">Namibia</text><text x="582" y="457" textLength="191">Madagascar</text><text x="808" y="471" textLength="121" class="sm">Mauritius</text><text x="191" y="625" textLength="194">South Africa</text><text x="1060" y="64">M</text></g>
          <g transform="translate(1650 -27)"><text x="445" y="43" textLength="63">Iran</text><text x="320" y="104" textLength="86" class="sm">Kuwait</text><text x="16" y="161" textLength="90">Egypt</text><text x="211" y="219" textLength="201">Saudi Arabia</text><text x="478" y="256" textLength="92">Oman</text><text x="164" y="358" textLength="90" class="sm">Eritrea</text><text x="307" y="354" textLength="110">Yemen</text><text x="12" y="391" textLength="101">Sudan</text><text x="163" y="482" textLength="128">Ethiopia</text><text x="643" y="126" textLength="134">Pakistan</text></g>
        </g>
        <g class="ocean">
          <text x="824" y="1041" textLength="240" class="big">South</text><text x="770" y="1134" textLength="345" class="big">Atlantic</text><text x="820" y="1227" textLength="250" class="big">Ocean</text>
          <text x="2207" y="337" textLength="147">Arabian</text><text x="2246" y="384" textLength="68">Sea</text>
        </g>
        <g class="city">
          <g transform="translate(-30 -27)"><text x="28" y="428" textLength="123">Caracas</text><text x="502" y="674" textLength="142">Fortaleza</text><text x="581" y="884" textLength="135">Salvador</text><text x="368" y="957" textLength="226">Belo Horizonte</text><text x="500" y="1062" textLength="217">Rio de Janeiro</text><text x="28" y="1215" textLength="63">iago</text><circle cx="571" cy="691" r="6"/><circle cx="574" cy="851" r="6"/><circle cx="481" cy="973" r="6"/><circle cx="493" cy="1030" r="6"/><g class="cap"><circle cx="88" cy="446" r="9"/></g><circle cx="88" cy="446" r="4"/></g>
          <g transform="translate(1320 483)"><text x="520" y="173" textLength="113">Nairobi</text><text x="768" y="179" textLength="115">Victoria</text><text x="17" y="722" textLength="166">Cape Town</text><circle cx="826" cy="197" r="6"/><g class="cap"><circle cx="508" cy="139" r="9"/></g><circle cx="508" cy="139" r="4"/></g>
          <g transform="translate(1650 -27)"><text x="95" y="77" textLength="83">Cairo</text><text x="666" y="285" textLength="120">Mumbai</text><g class="cap"><circle cx="82" cy="89" r="9"/></g><circle cx="82" cy="89" r="4"/></g>
        </g>
      </svg>
      <div class="zoom">
        <button><svg width="11" height="11" viewBox="0 0 11 11"><path d="M5.500 0v11M0 5.500h11" stroke="#333" stroke-width="2.200"/></svg></button>
        <button><svg width="11" height="3" viewBox="0 0 11 3"><rect width="11" height="2.500" rx="1" fill="#333"/></svg></button>
        <button><svg width="8" height="17" viewBox="0 0 8 17"><path d="m4 0 4 7.500H0z" fill="#333"/><path d="M4 17 0 9.500h8z" fill="#ccc"/></svg></button>
      </div>
    </div>
    <button class="generate">Generate NFT</button>
    <div class="scroll-thumb"></div>
  </main>
</div>
</div>
</body>
</html>
```
FILE: styles.css
```css
* { box-sizing: border-box; }
body {
  margin: 0;
  width: 1920px;
  height: 1080px;
  overflow: hidden;
  background: #1b1b1b;
  color: #f2f2f2;
  font: 14px "Noto Sans", sans-serif;
  display: flex;
  flex-direction: column;
}
svg { flex: none; display: block; }
.defs { position: absolute; }

/* system bar */
.topbar {
  flex: 0 0 27px;
  display: grid;
  grid-template-columns: 100px 845px 775px 1fr;
  align-items: center;
  background: #141414;
  font-size: 13.8px;
}
.activities { padding-left: 18px; letter-spacing: 0.35px; }
.app-name { display: flex; align-items: center; gap: 7px; padding-left: 18px; letter-spacing: 0.08px; }
.clock { display: flex; gap: 11px; white-space: nowrap; }
.tray { display: flex; align-items: center; gap: 12px; margin-left: -2px; }
.docker { margin-right: 18px; }
.tray .battery { margin-left: -1px; }
.percent { margin-left: -7px; white-space: nowrap; }

.desktop { flex: 1; display: flex; min-height: 0; }

/* launcher */
.dock {
  flex: 0 0 70px;
  display: flex;
  flex-direction: column;
  padding-top: 4px;
  background: linear-gradient(165deg, #1a0e16 55%, #27151f);
}
.slot {
  flex: 0 0 68px;
  position: relative;
  display: flex;
  align-items: center;
  justify-content: center;
}
.raised { margin-bottom: 4px; }
.active-tile {
  width: 64px;
  height: 64px;
  border-radius: 12px;
  background: #433a41;
  display: flex;
  align-items: center;
  justify-content: center;
}
.run {
  position: absolute;
  left: 3px;
  top: 31px;
  width: 6px;
  height: 6px;
  border-radius: 50%;
  background: #e95420;
}
.run:has(+ .run) { top: 27px; }
.run + .run { top: 35px; }
.sep { height: 1px; margin: 1px 11px; background: #4f454c; }
.grid-btn {
  margin: auto auto 23px;
  display: grid;
  grid-template-columns: repeat(3, 6px);
  gap: 6px;
}
.grid-btn i { height: 6px; border-radius: 2px; background: #f0f0f0; }

/* browser */
.browser { flex: 1; display: flex; flex-direction: column; min-width: 0; }
.tabs {
  flex: 0 0 40px;
  display: grid;
  grid-template-columns: repeat(6, 103px) repeat(6, 102.25px) repeat(4, 101.9px) 1fr;
  align-items: center;
  padding-left: 1px;
  background: #0d0e14;
}
.tab {
  height: 24px;
  display: flex;
  align-items: center;
  gap: 8px;
  padding: 0 8px 0 12px;
  border-right: 1px solid #33353a;
  color: #a9aaad;
}
.tab svg { width: 16px; height: 16px; }
.tab span {
  flex: 1;
  overflow: hidden;
  white-space: nowrap;
  margin-top: -2px;
  font-size: 14.5px;
  letter-spacing: 0.1px;
  mask-image: linear-gradient(90deg, #000 68%, transparent 100%);
}
.no-div { border-color: transparent; }
.tab.current {
  height: 32px;
  margin: 0 0 0 2px;
  padding: 0 10px 0 10px;
  width: 98px;
  border: 0;
  border-radius: 8px;
  background: #2d383c;
  color: #f4f4f4;
}
.tab.current span { flex: 0 0 32px; letter-spacing: 0.4px; }
.tab .tab-x { width: 8px; height: 8px; margin-left: auto; }
.tab.current + .tab { padding-left: 11px; }
.fav-w { font: bold 9px "Liberation Sans", sans-serif; }
.fav-n { font: bold 10px "Liberation Serif", serif; fill: #fff; }
.fav-api { font: bold 11px "Liberation Mono", monospace; fill: #5b86ea; }
.window-btns { display: flex; align-items: center; gap: 27px; padding: 0 13px; }
.window-btns .push { margin-left: auto; margin-right: -1px; }
.window-btns svg:nth-child(4) { margin-left: -6px; }
.window-btns svg:nth-child(5) { margin-left: -4px; }

.toolbar {
  flex: 0 0 40px;
  display: flex;
  align-items: center;
  background: #20272a;
}
.nav-btns { display: flex; align-items: center; gap: 23px; width: 356px; padding-left: 18px; }
.bm { margin-right: 17px; }
.url {
  width: 1080px;
  height: 32px;
  border-radius: 8px;
  background: #0d0e14;
  display: flex;
  align-items: center;
  padding: 0 5px 0 9px;
}
.host { flex: 1; padding-left: 15px; font-size: 13.6px; letter-spacing: 0.05px; }
.host b { font-weight: 400; color: #b0b4b8; }
.share { margin-left: 17px; }
.bar { width: 1px; height: 16px; margin: 0 11px 0 9px; background: #aaa; }
.shield { display: flex; position: relative; margin-right: 4px; }
.shield em {
  position: absolute;
  left: 9px;
  top: -4px;
  width: 13px;
  height: 14px;
  border-radius: 7px;
  background: #5c6070;
  font: 10px/14px "Noto Sans", sans-serif;
  text-align: center;
}
.ext { flex: 1; display: flex; justify-content: flex-end; align-items: center; gap: 17px; padding-right: 15px; }

.bookmarks {
  flex: 0 0 33px;
  display: flex;
  align-items: center;
  gap: 17px;
  padding: 0 14px 6px 12px;
  background: #20272a;
  font-size: 14.5px;
  white-space: nowrap;
  letter-spacing: 0.1px;
}
.bookmarks a { flex: none; display: flex; align-items: center; gap: 7px; }
.bookmarks a svg { width: 16px; height: 16px; }
.bookmarks a span { flex: none; width: var(--w); }
.bookmarks .bare { padding-right: 1px; }
.bm-right { margin-left: auto; display: flex; align-items: center; }
.bm-right i { width: 2px; height: 18px; margin: 0 15px 0 17px; background: #0d0e14; }
.folder { margin-right: 7px; }

/* page */
.page {
  flex: 1;
  position: relative;
  padding-right: 10px;
  display: flex;
  flex-direction: column;
  align-items: center;
  font-family: "Liberation Sans", Arial, sans-serif;
}
h1 {
  margin: 52px 0 32px;
  color: #fff;
  font-size: 48px;
  line-height: 55px;
}
.search {
  width: 400px;
  height: 36px;
  border-radius: 4px;
  background: #2d2d2d;
  box-shadow: 0 0 10px 2px rgba(0, 0, 0, .1);
  display: flex;
  align-items: center;
  padding-left: 9px;
  gap: 10px;
}
.search input {
  flex: 1;
  border: 0;
  padding: 0;
  background: none;
  color: #eee;
  font: 15px "Open Sans", sans-serif;
}
.search input::placeholder { color: #757575; }
.map {
  position: relative;
  width: 800px;
  height: 400px;
  margin: 84px 0 40px;
  border-radius: 10px;
  overflow: hidden;
  background: #191b1a;
}
.land { fill: #343230; }
.lake { fill: #1b1d1c; }
.river { fill: none; stroke: #1b1d1c; stroke-width: 4; }
.borders { fill: none; stroke: #626160; stroke-width: 2.500; stroke-linejoin: round; }
.country, .city { font: 500 37px Roboto, sans-serif; }
.country text, .city text { stroke: #232323; stroke-width: 5px; stroke-linejoin: round; paint-order: stroke; }
.country { fill: #737373; }
.country .sm { font-size: 31px; }
.city { fill: #c8c8c8; font-weight: 400; }
.city circle { fill: #e4e4e4; }
.city .cap circle { fill: #222; stroke: #e4e4e4; stroke-width: 3.500; }
.ocean { fill: #666867; font: italic 35px Roboto, sans-serif; }
.ocean .big { font-size: 67px; }
.zoom {
  position: absolute;
  top: 10px;
  right: 10px;
  width: 29px;
  height: 87px;
  border-radius: 4px;
  background: #fff;
  display: flex;
  flex-direction: column;
  overflow: hidden;
}
.zoom button {
  flex: 1;
  display: flex;
  align-items: center;
  justify-content: center;
  padding: 0;
  border: 0;
  background: #fff;
}
.zoom button + button { border-top: 1px solid #ddd; }
.generate {
  width: 152px;
  height: 42px;
  border: 0;
  border-radius: 8px;
  background: #545454;
  color: #0a0a0a;
  font: bold 16px "Liberation Sans", Arial, sans-serif;
}
.scroll-thumb {
  position: absolute;
  right: 0;
  top: 0;
  width: 10px;
  height: 902px;
  border-radius: 5px;
  background: #61dafb;
}
```
